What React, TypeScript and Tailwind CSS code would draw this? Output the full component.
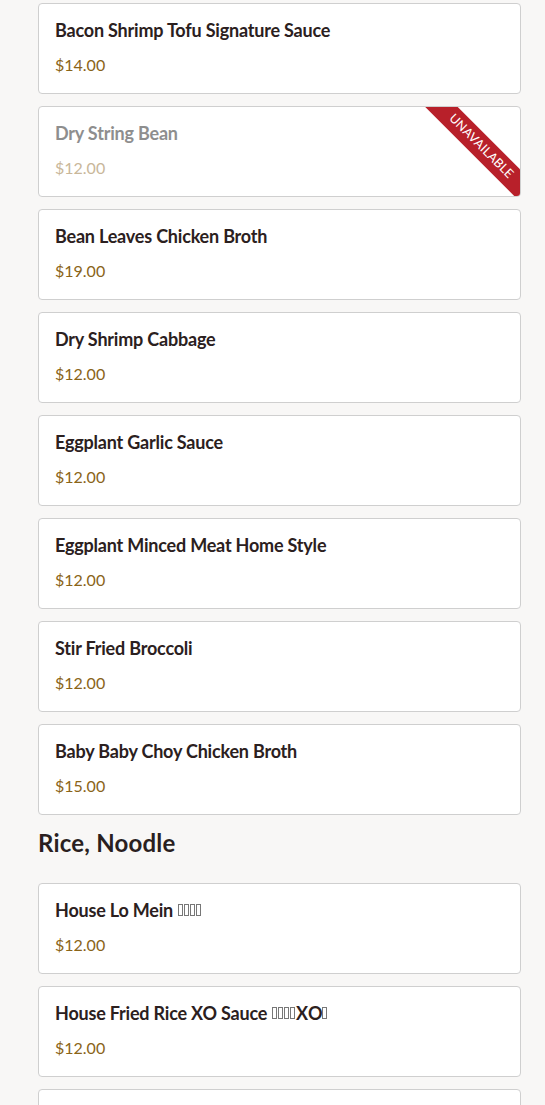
import React from 'react';

interface Dish {
  name: string;
  price: string;
  tofu?: string;
  unavailable?: boolean;
}

const vegetables: Dish[] = [
  { name: 'Bacon Shrimp Tofu Signature Sauce', price: '$14.00' },
  { name: 'Dry String Bean', price: '$12.00', unavailable: true },
  { name: 'Bean Leaves Chicken Broth', price: '$19.00' },
  { name: 'Dry Shrimp Cabbage', price: '$12.00' },
  { name: 'Eggplant Garlic Sauce', price: '$12.00' },
  { name: 'Eggplant Minced Meat Home Style', price: '$12.00' },
  { name: 'Stir Fried Broccoli', price: '$12.00' },
  { name: 'Baby Baby Choy Chicken Broth', price: '$15.00' },
];

const riceNoodle: Dish[] = [
  { name: 'House Lo Mein', price: '$12.00', tofu: '####' },
  { name: 'House Fried Rice XO Sauce', price: '$12.00', tofu: '####XO#' },
  { name: 'Shrimp Fried Rice', price: '$12.00' },
];

// glyphs the original font could not draw show up as empty boxes
const Tofu: React.FC<{ pattern: string }> = ({ pattern }) => (
  <span className="ml-[5px] inline-flex items-center">
    {pattern.split('').map((c, i) =>
      c === '#' ? (
        <span key={i} className="inline-block w-[5px] h-[12px] border border-[#777] mr-[1px]" />
      ) : (
        <span key={i}>{c}</span>
      )
    )}
  </span>
);

const DishCard: React.FC<{ dish: Dish }> = ({ dish }) => (
  <div className="relative overflow-hidden h-[91px] bg-white border border-[#cfcfcf] rounded-[4px] pl-[16px] pt-[12px]">
    <div
      className={`text-[18px] leading-[28px] font-bold tracking-[-0.2px] flex items-center ${
        dish.unavailable ? 'text-[#8e8e8e]' : 'text-[#2b2020]'
      }`}
    >
      {dish.name}
      {dish.tofu && <Tofu pattern={dish.tofu} />}
    </div>
    <div
      className={`mt-[9px] text-[16px] leading-[24px] ${
        dish.unavailable ? 'text-[#c9b79a]' : 'text-[#8a6418]'
      }`}
    >
      {dish.price}
    </div>
    {dish.unavailable && (
      <div className="absolute right-[-41px] top-[28px] w-[160px] h-[23px] rotate-45 bg-[#b8202a] flex items-center justify-center text-white text-[12.5px] tracking-[0.2px]">
        UNAVAILABLE
      </div>
    )}
  </div>
);

export default function App() {
  return (
    <div className="min-h-screen bg-[#f8f7f6] pl-[38px] pr-[24px] pt-[3px] font-['Lato','Liberation_Sans',sans-serif] overflow-hidden h-[1105px]">
      <div className="flex flex-col gap-[12px]">
        {vegetables.map((d) => (
          <DishCard key={d.name} dish={d} />
        ))}
      </div>
      <h2 className="mt-[12px] mb-[24px] text-[24px] leading-[32px] font-bold tracking-[0.2px] text-[#2a1f1f]">Rice, Noodle</h2>
      <div className="flex flex-col gap-[12px]">
        {riceNoodle.map((d) => (
          <DishCard key={d.name} dish={d} />
        ))}
      </div>
    </div>
  );
}
